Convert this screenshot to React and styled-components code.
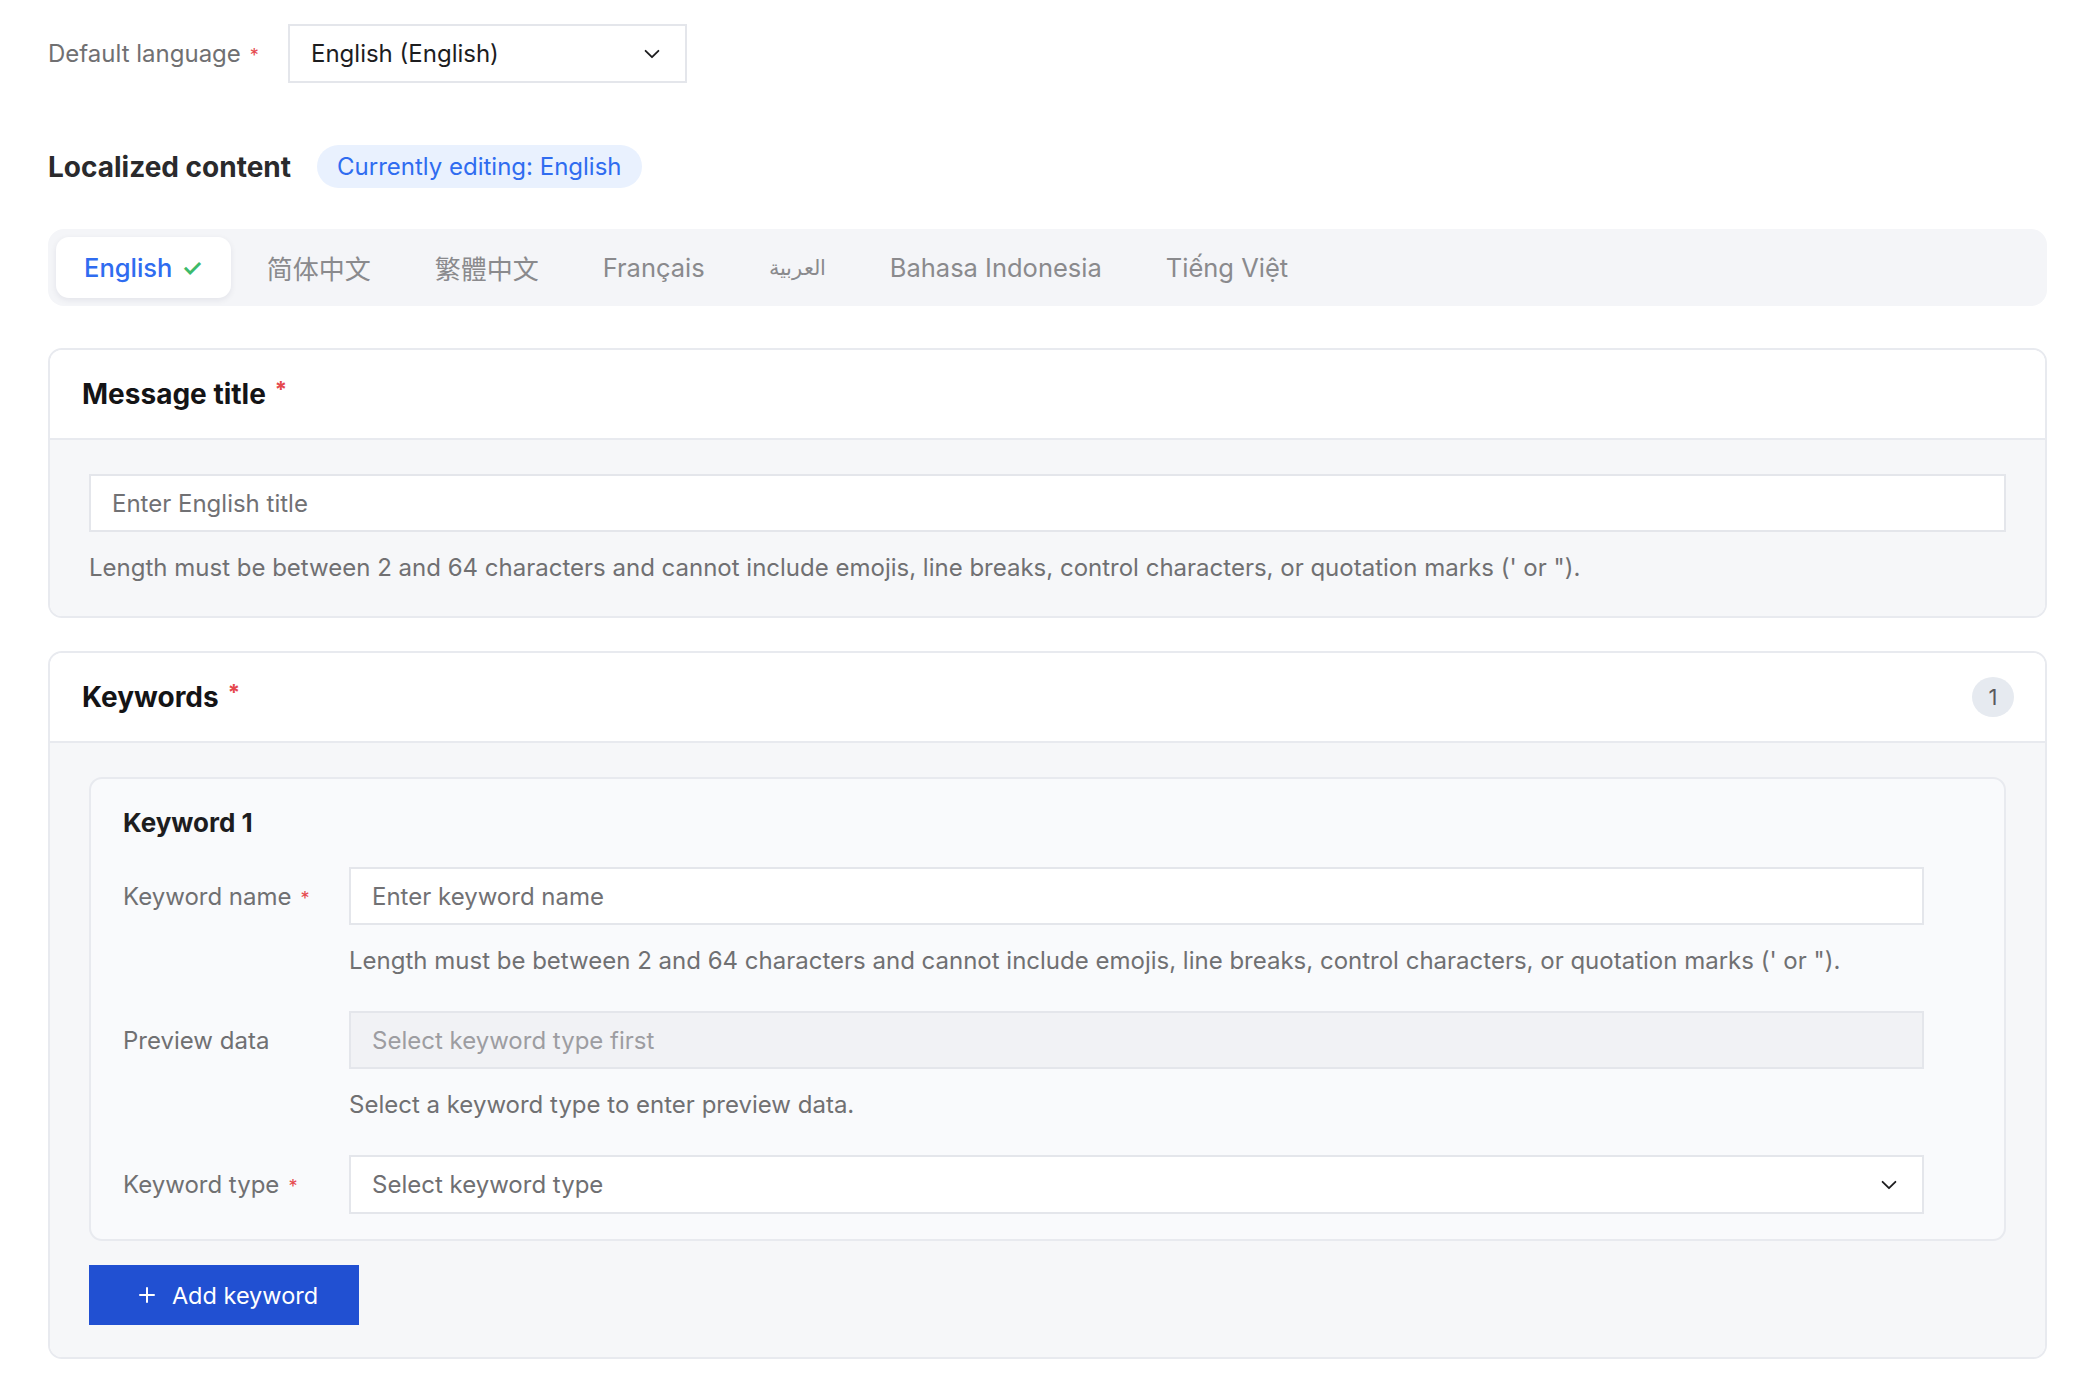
import React from "react";
import styled, { createGlobalStyle } from "styled-components";

const Global = createGlobalStyle`
  html, body { margin: 0; padding: 0; background: #ffffff; }
  body { font-family: Inter, "Noto Sans", "Noto Sans CJK SC", sans-serif; color: #1d1d1f; -webkit-font-smoothing: antialiased; }
  * { box-sizing: border-box; }
`;

const Page = styled.div`
  padding: 24px 39px 30px 48px;
`;

const LangRow = styled.div`
  display: flex;
  align-items: center;
`;

const FieldLabel = styled.div`
  width: ${(p) => p.$w || 240}px;
  flex: 0 0 auto;
  font-size: 24px;
  color: #707072;
  display: flex;
  align-items: center;
`;

const Req = styled.span`
  color: #e5484d;
  font-size: 18px;
  margin-left: 9px;
  position: relative;
  top: 2px;
`;

const SelectBox = styled.div`
  width: ${(p) => (p.$w ? p.$w + "px" : "auto")};
  flex: ${(p) => (p.$w ? "0 0 auto" : "1 1 auto")};
  height: 59px;
  border: 2px solid #e4e6eb;
  background: #ffffff;
  display: flex;
  align-items: center;
  justify-content: space-between;
  padding: 0 22px 0 21px;
  font-size: 24px;
  color: ${(p) => (p.$placeholder ? "#6f6f72" : "#1d1d1f")};
`;

const Chevron = () => (
  <svg width="22" height="22" viewBox="0 0 24 24" fill="none" stroke="#1d1d1f" strokeWidth="2" strokeLinecap="round" strokeLinejoin="round">
    <path d="M5 8.5l7 7 7-7" />
  </svg>
);

const HeadingRow = styled.div`
  display: flex;
  align-items: center;
  gap: 26px;
  margin-top: 62px;
  height: 43px;
`;

const H2 = styled.h2`
  margin: 0;
  font-size: 28px;
  font-weight: 700;
  color: #2a2a2c;
`;

const Pill = styled.div`
  height: 43px;
  padding: 0 20px;
  border-radius: 22px;
  background: #e9f1fe;
  color: #2f6cf0;
  font-size: 24px;
  display: flex;
  align-items: center;
`;

const TabBar = styled.div`
  margin-top: 41px;
  background: #f4f5f8;
  border-radius: 16px;
  padding: 8px;
  display: flex;
  gap: 8px;
  height: 77px;
`;

const Tab = styled.div`
  height: 61px;
  padding: 0 28px;
  display: flex;
  align-items: center;
  gap: 9px;
  font-size: ${(p) => p.$size || 25.5}px;
  border-radius: 13px;
  color: ${(p) => (p.$active ? "#2f6cf0" : "#8a8a8d")};
  background: ${(p) => (p.$active ? "#ffffff" : "transparent")};
  box-shadow: ${(p) => (p.$active ? "0 2px 6px rgba(20, 30, 60, 0.08)" : "none")};
  font-weight: ${(p) => (p.$active ? 500 : 400)};
`;

const Check = styled.span`
  color: #3dba6b;
  font-size: 24px;
  font-weight: 600;
`;

const Card = styled.section`
  margin-top: ${(p) => p.$mt}px;
  border: 2px solid #e8eaef;
  border-radius: 14px;
  overflow: hidden;
`;

const CardHeader = styled.div`
  height: 90px;
  background: #ffffff;
  border-bottom: 2px solid #e8eaef;
  padding: 0 31px 0 32px;
  display: flex;
  align-items: center;
  justify-content: space-between;
`;

const CardTitle = styled.h3`
  margin: 0;
  font-size: 28px;
  font-weight: 700;
  color: #141416;
  display: flex;
  align-items: center;
`;

const TitleReq = styled.span`
  color: #e5484d;
  font-size: 22px;
  margin-left: 9px;
  position: relative;
  top: -5px;
`;

const CountBadge = styled.div`
  width: 42px;
  height: 40px;
  border-radius: 50%;
  background: #e6eaf0;
  color: #5a5a5e;
  font-size: 22px;
  display: flex;
  align-items: center;
  justify-content: center;
`;

const CardBody = styled.div`
  background: #f6f7f9;
  padding: 34px 39px 32px 39px;
`;

const TextInput = styled.div`
  flex: 1 1 auto;
  height: 58px;
  border: 2px solid #e4e6eb;
  background: ${(p) => (p.$disabled ? "#f1f2f5" : "#ffffff")};
  display: flex;
  align-items: center;
  padding: 0 21px;
  font-size: 24px;
  color: ${(p) => (p.$disabled ? "#9d9da1" : "#717174")};
`;

const Hint = styled.div`
  margin-top: 19px;
  font-size: 24px;
  line-height: 33px;
  color: #707072;
`;

const InnerCard = styled.div`
  border: 2px solid #e8eaef;
  border-radius: 13px;
  background: #f9fafc;
  padding: 25px 80px 25px 32px;
`;

const InnerTitle = styled.h4`
  margin: 0 0 25px 0;
  font-size: 26px;
  line-height: 38px;
  font-weight: 700;
  color: #1d1d1f;
`;

const FormRow = styled.div`
  display: flex;
  align-items: flex-start;
  & + & {
    margin-top: 34px;
  }
`;

const RowLabel = styled(FieldLabel)`
  height: 58px;
`;

const FieldCol = styled.div`
  flex: 1 1 auto;
  display: flex;
  flex-direction: column;
`;

const AddButton = styled.button`
  margin-top: 24px;
  width: 270px;
  height: 60px;
  border: none;
  border-radius: 0;
  background: #2150d2;
  color: #ffffff;
  font-family: inherit;
  font-size: 23.5px;
  display: flex;
  align-items: center;
  justify-content: center;
  gap: 16px;
  padding: 0 0 0 8px;
`;

const PlusIcon = () => (
  <svg width="18" height="18" viewBox="0 0 18 18" fill="none" stroke="#ffffff" strokeWidth="2" strokeLinecap="round">
    <path d="M9 2v14M2 9h14" />
  </svg>
);

const tabs = [
  { label: "简体中文", size: 26 },
  { label: "繁體中文", size: 26 },
  { label: "Français" },
  { label: "العربية", size: 20.5 },
  { label: "Bahasa Indonesia" },
  { label: "Tiếng Việt" },
];

const HINT = "Length must be between 2 and 64 characters and cannot include emojis, line breaks, control characters, or quotation marks (' or \").";

export default function App() {
  return (
    <>
      <Global />
      <Page>
        <LangRow>
          <FieldLabel>
            Default language<Req>*</Req>
          </FieldLabel>
          <SelectBox $w={399}>
            <span>English (English)</span>
            <Chevron />
          </SelectBox>
        </LangRow>

        <HeadingRow>
          <H2>Localized content</H2>
          <Pill>Currently editing: English</Pill>
        </HeadingRow>

        <TabBar>
          <Tab $active>
            English <Check>✓</Check>
          </Tab>
          {tabs.map((t) => (
            <Tab key={t.label} $size={t.size}>
              {t.label}
            </Tab>
          ))}
        </TabBar>

        <Card $mt={42}>
          <CardHeader>
            <CardTitle>
              Message title<TitleReq>*</TitleReq>
            </CardTitle>
          </CardHeader>
          <CardBody>
            <TextInput>Enter English title</TextInput>
            <Hint>{HINT}</Hint>
          </CardBody>
        </Card>

        <Card $mt={33}>
          <CardHeader>
            <CardTitle>
              Keywords<TitleReq>*</TitleReq>
            </CardTitle>
            <CountBadge>1</CountBadge>
          </CardHeader>
          <CardBody>
            <InnerCard>
              <InnerTitle>Keyword 1</InnerTitle>
              <FormRow>
                <RowLabel $w={226}>
                  Keyword name<Req>*</Req>
                </RowLabel>
                <FieldCol>
                  <TextInput>Enter keyword name</TextInput>
                  <Hint>{HINT}</Hint>
                </FieldCol>
              </FormRow>
              <FormRow>
                <RowLabel $w={226}>Preview data</RowLabel>
                <FieldCol>
                  <TextInput $disabled>Select keyword type first</TextInput>
                  <Hint>Select a keyword type to enter preview data.</Hint>
                </FieldCol>
              </FormRow>
              <FormRow>
                <RowLabel $w={226}>
                  Keyword type<Req>*</Req>
                </RowLabel>
                <FieldCol>
                  <SelectBox $placeholder>
                    <span>Select keyword type</span>
                    <Chevron />
                  </SelectBox>
                </FieldCol>
              </FormRow>
            </InnerCard>
            <AddButton>
              <PlusIcon />
              Add keyword
            </AddButton>
          </CardBody>
        </Card>
      </Page>
    </>
  );
}
